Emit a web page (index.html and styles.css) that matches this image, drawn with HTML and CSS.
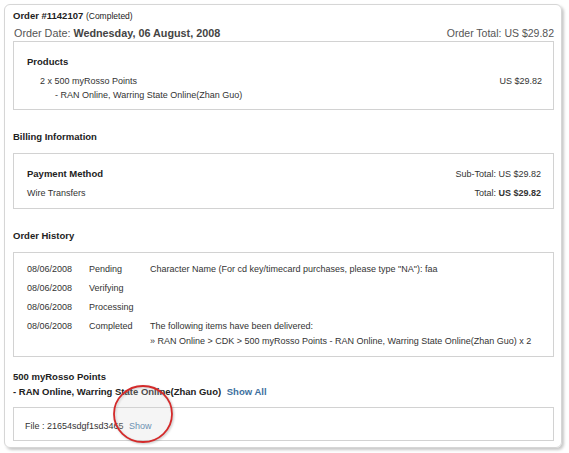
FILE: index.html
```html
<!DOCTYPE html>
<html lang="en">
<head>
  <meta charset="UTF-8">
  <title>Order #1142107</title>
  <link rel="stylesheet" href="styles.css">
</head>
<body>

<div class="order-panel">
  <!-- Order header -->
  <div class="order-title"><b>Order #1142107</b> <span class="order-status">(Completed)</span></div>
  <div class="order-meta">
    <div class="order-date">Order Date: <b>Wednesday, 06 August, 2008</b></div>
    <div>Order Total: US $29.82</div>
  </div>

  <!-- Products -->
  <div class="box products">
    <div class="box-title">Products</div>
    <div class="product-row">
      <div>
        <div class="product-name">2 x 500 myRosso Points</div>
        <div class="product-sub">- RAN Online, Warring State Online(Zhan Guo)</div>
      </div>
      <div class="product-price">US $29.82</div>
    </div>
  </div>

  <!-- Billing -->
  <h3 class="section-title">Billing Information</h3>
  <div class="box billing">
    <div class="box-title">Payment Method</div>
    <div class="amount">Sub-Total: US $29.82</div>
    <div>Wire Transfers</div>
    <div class="amount">Total: <b>US $29.82</b></div>
  </div>

  <!-- History -->
  <h3 class="section-title">Order History</h3>
  <div class="box history">
    <div class="history-row">
      <div>08/06/2008</div>
      <div>Pending</div>
      <div>Character Name (For cd key/timecard purchases, please type "NA"): faa</div>
    </div>
    <div class="history-row">
      <div>08/06/2008</div>
      <div>Verifying</div>
      <div></div>
    </div>
    <div class="history-row">
      <div>08/06/2008</div>
      <div>Processing</div>
      <div></div>
    </div>
    <div class="history-row">
      <div>08/06/2008</div>
      <div>Completed</div>
      <div>The following items have been delivered:<br>&raquo; RAN Online &gt; CDK &gt; 500 myRosso Points - RAN Online, Warring State Online(Zhan Guo) x 2</div>
    </div>
  </div>

  <!-- Delivered item -->
  <div class="item-title">
    500 myRosso Points<br>
    - RAN Online, Warring State Online(Zhan Guo) <a href="#" class="show-all">Show All</a>
  </div>
  <div class="box file-box">
    File : 21654sdgf1sd3465 <a href="#" class="show-link">Show</a>
  </div>

  <svg class="highlight" width="66" height="64" viewBox="0 0 66 64">
    <ellipse cx="33" cy="32" rx="29" ry="28" fill="rgba(255,255,255,0.2)" stroke="#d42a2a" stroke-width="1.8"/>
  </svg>
</div>

</body>
</html>
```

FILE: styles.css
```css
body {
  margin: 0;
  padding: 4px 8px 5px 4px;
  font-family: "Liberation Sans", Arial, sans-serif;
  font-size: 9px;
  color: #333;
  background: #fff;
}

.order-panel {
  position: relative;
  width: 541px;
  padding: 4px 7px 6px 8px;
  border: 1px solid #d6d6d6;
  border-radius: 6px;
  box-shadow: 2px 2px 3px rgba(0, 0, 0, 0.22);
}

.order-title {
  line-height: 14px;
  font-size: 9.5px;
  color: #222;
}

.order-status {
  font-size: 8.5px;
}

.order-meta {
  display: flex;
  justify-content: space-between;
  margin-top: 2px;
  line-height: 16px;
  font-size: 10.5px;
  color: #555;
}

.order-date {
  padding-left: 1px;
  font-size: 10.8px;
}

.order-meta b {
  color: #444;
}

/* Bordered content boxes */
.box {
  border: 1px solid #d2d2d2;
  line-height: 14px;
}

.box-title {
  font-weight: bold;
  font-size: 9.5px;
  color: #222;
}

.products {
  padding: 13px 11px 7px 13px;
}

.product-row {
  display: flex;
  justify-content: space-between;
  margin-top: 5px;
}

.product-name {
  padding-left: 13px;
}

.product-sub {
  padding-left: 28px;
}

.section-title {
  margin: 20px 0 9px;
  line-height: 14px;
  font-size: 9.5px;
  color: #222;
}

.billing {
  display: grid;
  grid-template-columns: 1fr auto;
  grid-auto-rows: 19px;
  align-items: center;
  padding: 10px 12px 6px 13px;
}

.amount {
  text-align: right;
}

.history {
  padding: 7px 12px 5px 13px;
}

.history-row {
  display: grid;
  grid-template-columns: 62px 61px 1fr;
  padding: 2px 0;
  line-height: 15px;
}

.item-title {
  margin: 12px 0 8px;
  line-height: 15px;
  font-weight: bold;
  font-size: 9.5px;
  color: #222;
}

.show-all {
  margin-left: 3px;
  color: #3d6f9e;
  text-decoration: none;
}

.file-box {
  padding: 11px 12px 7px 11px;
}

.show-link {
  margin-left: 3px;
  color: #4a7aa8;
  text-decoration: none;
}

/* Red annotation ring drawn over the file row */
.highlight {
  position: absolute;
  left: 105px;
  top: 377px;
  filter: drop-shadow(1px 1px 1px rgba(0, 0, 0, 0.25));
}
```
